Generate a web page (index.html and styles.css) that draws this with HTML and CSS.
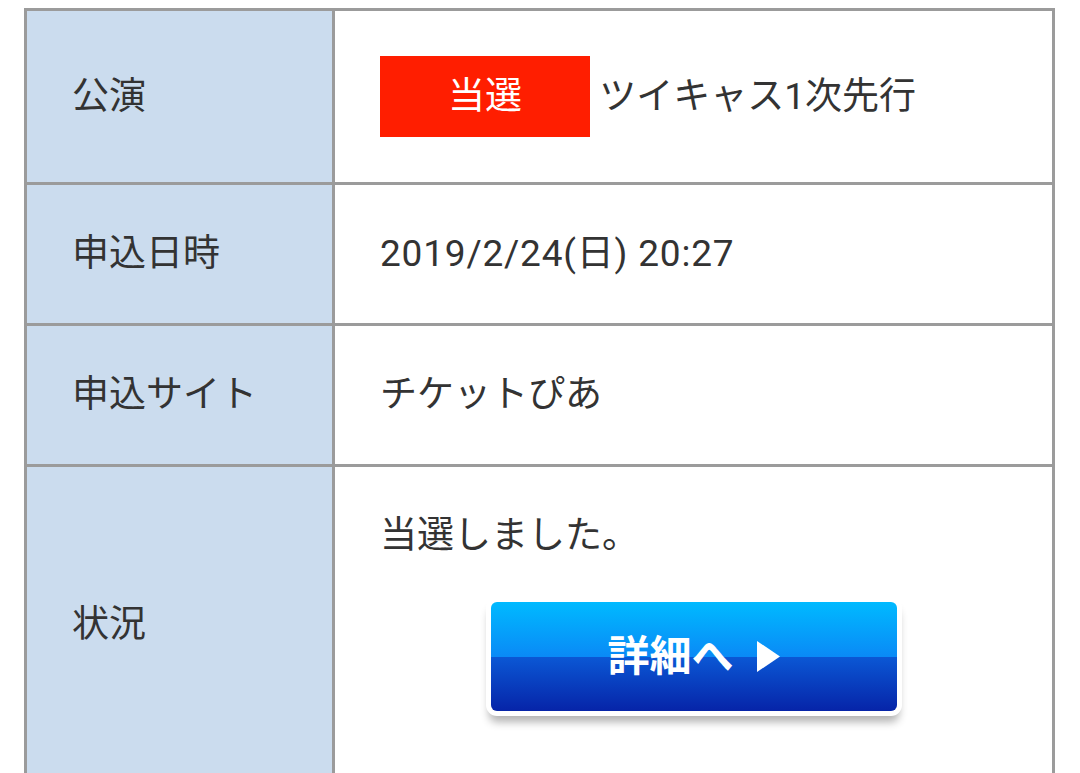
FILE: index.html
```html
<!DOCTYPE html>
<html lang="ja">
<head>
  <meta charset="UTF-8">
  <title>申込状況</title>
  <link rel="stylesheet" href="styles.css">
</head>
<body>

  <div class="page">
    <div class="detail">
      <div class="label">公演</div>
      <div class="value">
        <span class="badge">当選</span>
        <span class="title">ツイキャス1次先行</span>
      </div>

      <div class="label">申込日時</div>
      <div class="value"><span class="date">2019/2/24(日) 20:27</span></div>

      <div class="label">申込サイト</div>
      <div class="value">チケットぴあ</div>

      <div class="label">状況</div>
      <div class="value">
        <p>当選しました。</p>
        <a class="detail-btn" href="#">
          詳細へ
          <svg class="arrow" width="24" height="31" viewBox="0 0 24 31">
            <polygon points="1,0 24,15.5 1,31" fill="#fff" />
          </svg>
        </a>
      </div>
    </div>
  </div>

</body>
</html>
```

FILE: styles.css
```css
* { margin: 0; padding: 0; box-sizing: border-box; }

body {
  background: #fff;
  font-family: Roboto, "Noto Sans CJK JP", sans-serif;
  font-size: 37px;
  line-height: 48px;
  color: #333;
}

.page {
  padding: 8px 25px 0 24px;
}

/* gaps in the grid draw the borders */
.detail {
  display: grid;
  grid-template-columns: 305px 1fr;
  gap: 3px;
  padding: 3px;
  background: #9b9b9b;
}

.label {
  background: #cbdcee;
  padding: 0 45px;
  display: flex;
  align-items: center;
}

.value {
  background: #fff;
  padding: 45px 45px;
}

.badge {
  display: inline-flex;
  align-items: center;
  justify-content: center;
  width: 210px;
  height: 81px;
  background: #ff1e00;
  color: #fff;
  vertical-align: middle;
}

.title {
  vertical-align: middle;
}

.date {
  letter-spacing: 0.8px;
}

.detail-btn {
  display: flex;
  align-items: center;
  justify-content: center;
  gap: 22px;
  width: 406px;
  height: 109px;
  margin: 42px auto 27px;
  border-radius: 6px;
  background: linear-gradient(#00baff 0%, #0a8af6 50%, #0b58d5 50%, #0624a8 100%);
  box-shadow: 0 0 0 5px #fff, 0 9px 8px 2px rgba(0, 0, 0, 0.3);
  color: #fff;
  font-size: 42px;
  font-weight: bold;
  text-decoration: none;
}

.arrow {
  display: block;
}
```
